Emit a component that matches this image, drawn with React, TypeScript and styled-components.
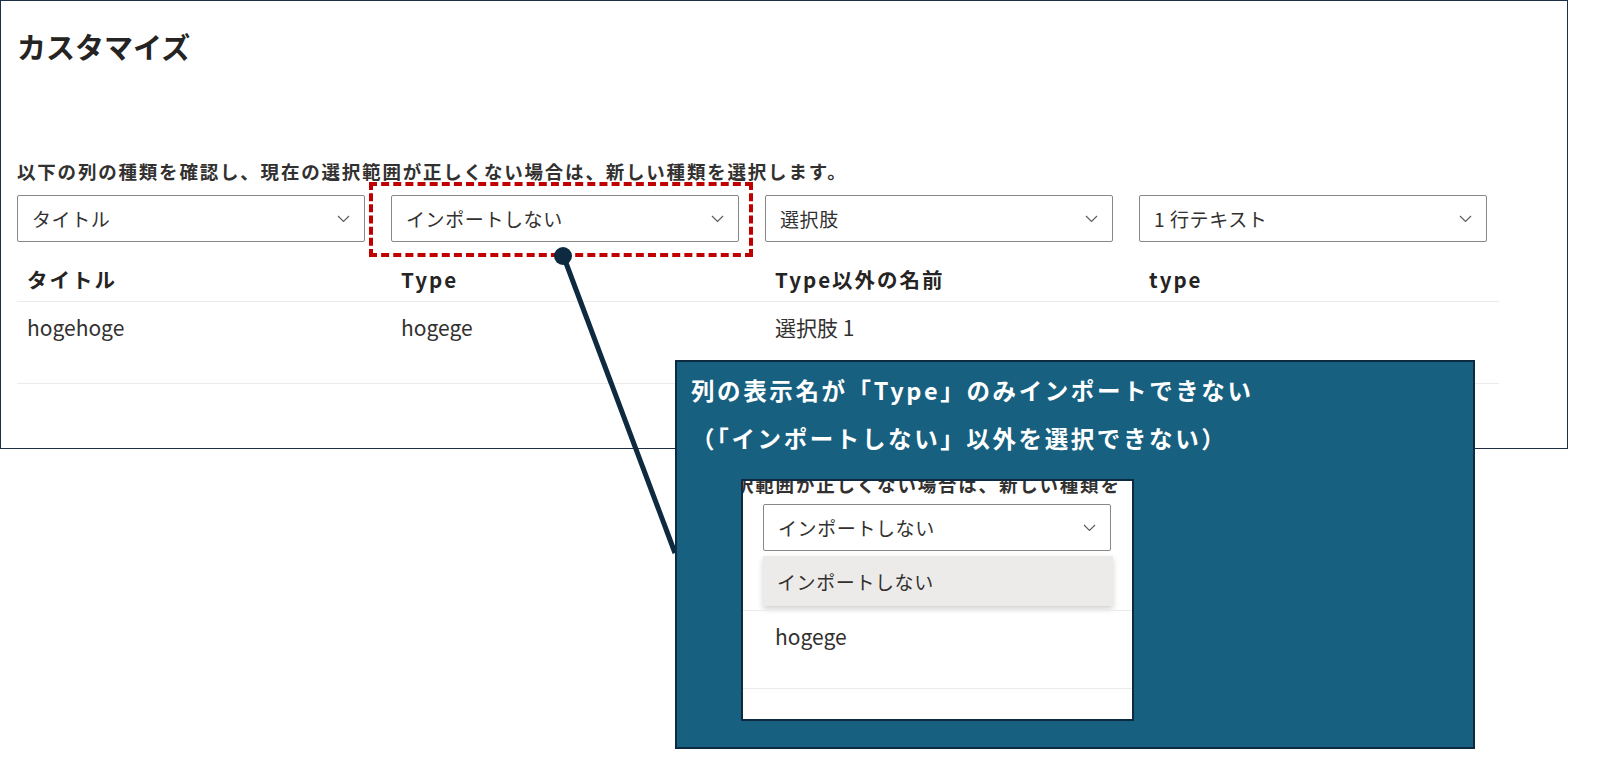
import React from 'react';
import styled, { createGlobalStyle } from 'styled-components';

const Global = createGlobalStyle`
  body { margin: 0; background: #fff; font-family: "Noto Sans CJK JP", "Noto Sans", sans-serif; color: #323130; }
`;

const Stage = styled.div`
  position: relative;
  width: 1613px;
  height: 770px;
  overflow: hidden;
`;

const Panel = styled.div`
  box-sizing: border-box;
  width: 1568px;
  height: 449px;
  border: 1.5px solid #1e2f45;
  padding: 22px 16px 0 16px;
`;

const Title = styled.h1`
  margin: 0;
  font-size: 29px;
  font-weight: 700;
  color: #252423;
  line-height: 46px;
`;

const Hint = styled.div`
  margin-top: 91px;
  font-size: 18.5px;
  letter-spacing: 1.8px;
  font-weight: 700;
  color: #323130;
  line-height: 22px;
  white-space: nowrap;
`;

const Selects = styled.div`
  display: grid;
  grid-template-columns: repeat(4, 348px);
  column-gap: 26px;
  margin-top: 13px;
`;

const SelectBox = styled.div<{ $w?: number }>`
  box-sizing: border-box;
  height: 47px;
  ${p => (p.$w ? `width: ${p.$w}px;` : '')}
  border: 1.5px solid #8a8886;
  border-radius: 2px;
  background: #fff;
  display: flex;
  align-items: center;
  justify-content: space-between;
  padding: 0 14px 0 14px;
  font-size: 19px;
  letter-spacing: 0.6px;
  color: #323130;
`;

const Chevron = () => (
  <svg width="13" height="8" viewBox="0 0 13 8">
    <path d="M1 1l5.5 5.5L12 1" fill="none" stroke="#605e5c" strokeWidth="1.2" />
  </svg>
);

const Table = styled.div`
  width: 1482px;
  margin-top: 14px;
`;

const Row = styled.div<{ $head?: boolean; $h: number }>`
  display: grid;
  grid-template-columns: 374px 374px 374px 1fr;
  align-items: center;
  height: ${p => p.$h}px;
  padding-left: 10px;
  border-bottom: 1.5px solid #edebe9;
  font-size: ${p => (p.$head ? 20.5 : 21)}px;
  letter-spacing: ${p => (p.$head ? 2 : 0)}px;
  font-weight: ${p => (p.$head ? 700 : 400)};
  color: ${p => (p.$head ? '#252423' : '#323130')};
`;

const Cell = styled.div<{ $top?: boolean }>`
  align-self: ${p => (p.$top ? 'start' : 'center')};
  padding-top: ${p => (p.$top ? 10 : 0)}px;
`;

const Dashed = styled.div`
  position: absolute;
  left: 369px;
  top: 182px;
  width: 384px;
  height: 75px;
  box-sizing: border-box;
  border: 4px dashed #c00000;
`;

const Connector = styled.svg`
  position: absolute;
  left: 0;
  top: 0;
`;

const Callout = styled.div`
  position: absolute;
  left: 675px;
  top: 360px;
  width: 800px;
  height: 389px;
  box-sizing: border-box;
  background: #17607f;
  border: 2.5px solid #0d2a40;
  padding: 4px 14px;
  color: #fff;
  font-size: 23.5px;
  letter-spacing: 2.6px;
  font-weight: 700;
  line-height: 48px;
`;

const CalloutLine = styled.div`
  white-space: nowrap;
`;

const Inset = styled.div`
  margin: 17px 0 0 50px;
  width: 393px;
  height: 242px;
  box-sizing: border-box;
  background: #fff;
  border: 2px solid #0d2a40;
  color: #323130;
  font-weight: 400;
  letter-spacing: 0;
  line-height: normal;
  overflow: hidden;
`;

const Clipped = styled.div`
  margin-top: -10px;
  margin-left: -8px;
  font-size: 18.5px;
  letter-spacing: 1.8px;
  font-weight: 700;
  white-space: nowrap;
  height: 16px;
`;

const InsetBody = styled.div`
  padding: 17px 0 0 20px;
`;

const Option = styled.div`
  box-sizing: border-box;
  width: 350px;
  height: 50px;
  margin-top: 5px;
  background: #edebe9;
  box-shadow: 0 3px 6px rgba(0, 0, 0, 0.18);
  display: flex;
  align-items: center;
  padding-left: 14px;
  font-size: 19px;
  letter-spacing: 0.6px;
`;

const InsetRow = styled.div`
  margin-top: 4px;
  padding: 10px 0 0 32px;
  height: 79px;
  box-sizing: border-box;
  border-top: 1.5px solid #edebe9;
  border-bottom: 1.5px solid #edebe9;
  font-size: 21px;
`;

const columns = ['タイトル', 'インポートしない', '選択肢', '1 行テキスト'];

export default function App() {
  return (
    <Stage>
      <Global />
      <Panel>
        <Title>カスタマイズ</Title>
        <Hint>以下の列の種類を確認し、現在の選択範囲が正しくない場合は、新しい種類を選択します。</Hint>
        <Selects>
          {columns.map(c => (
            <SelectBox key={c}>
              <span>{c}</span>
              <Chevron />
            </SelectBox>
          ))}
        </Selects>
        <Table>
          <Row $head $h={45}>
            <Cell>タイトル</Cell>
            <Cell>Type</Cell>
            <Cell>Type以外の名前</Cell>
            <Cell>type</Cell>
          </Row>
          <Row $h={81}>
            <Cell $top>hogehoge</Cell>
            <Cell $top>hogege</Cell>
            <Cell $top>選択肢 1</Cell>
            <Cell $top />
          </Row>
        </Table>
      </Panel>
      <Dashed />
      <Connector width="1613" height="770">
        <line x1="563" y1="255" x2="675" y2="553" stroke="#0d2a40" strokeWidth="5" />
        <circle cx="563" cy="256" r="9" fill="#0d2a40" />
      </Connector>
      <Callout>
        <CalloutLine>列の表示名が「Type」のみインポートできない</CalloutLine>
        <CalloutLine>（「インポートしない」以外を選択できない）</CalloutLine>
        <Inset>
          <Clipped>択範囲が正しくない場合は、新しい種類を</Clipped>
          <InsetBody>
            <SelectBox $w={348}>
              <span>インポートしない</span>
              <Chevron />
            </SelectBox>
            <Option>インポートしない</Option>
          </InsetBody>
          <InsetRow>hogege</InsetRow>
        </Inset>
      </Callout>
    </Stage>
  );
}
